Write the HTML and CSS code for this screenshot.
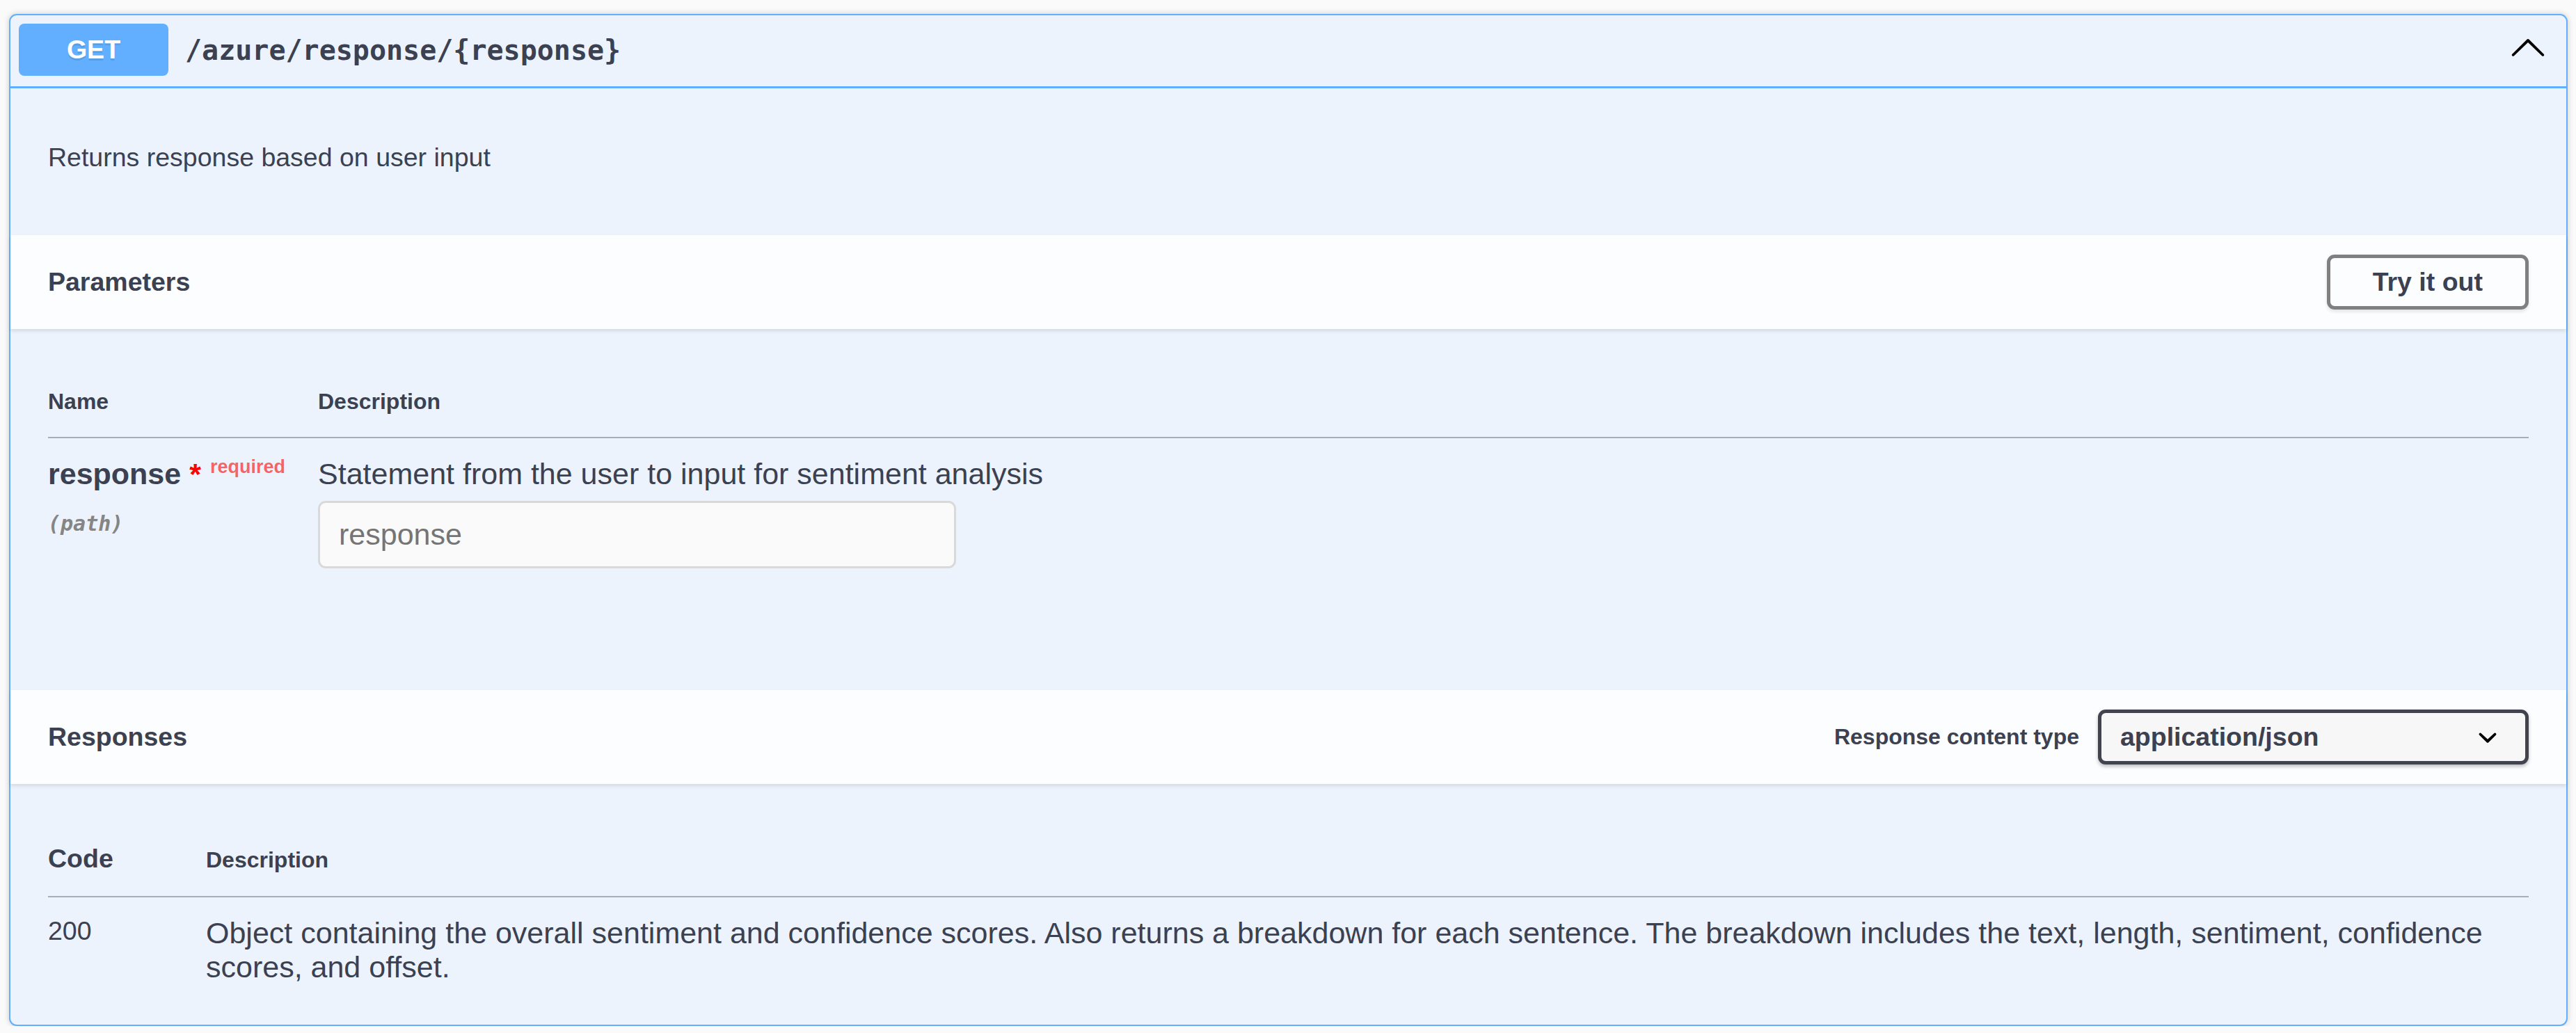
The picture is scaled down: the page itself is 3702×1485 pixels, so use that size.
FILE: index.html
```html
<!DOCTYPE html>
<html lang="en">
<head>
<meta charset="utf-8">
<title>GET /azure/response/{response}</title>
<link rel="stylesheet" href="styles.css">
</head>
<body>
<div class="page">
  <div class="opblock">
    <div class="summary">
      <span class="method">GET</span>
      <span class="path">/azure/response/{response}</span>
      <svg class="arrow" viewBox="0 0 20 20" aria-hidden="true"><path d="M 17.418 14.908 C 17.69 15.176 18.127 15.176 18.397 14.908 C 18.667 14.64 18.668 14.207 18.397 13.939 L 10.489 6.109 C 10.219 5.841 9.782 5.841 9.51 6.109 L 1.602 13.939 C 1.332 14.207 1.332 14.64 1.602 14.908 C 1.873 15.176 2.311 15.176 2.581 14.908 L 10 7.767 L 17.418 14.908 Z"/></svg>
    </div>

    <div class="description">
      <p>Returns response based on user input</p>
    </div>

    <div class="section-header">
      <h4 class="section-title">Parameters</h4>
      <button class="btn" type="button">Try it out</button>
    </div>

    <div class="table-container">
      <table class="params">
        <thead>
          <tr>
            <th class="col-name">Name</th>
            <th>Description</th>
          </tr>
        </thead>
        <tbody>
          <tr>
            <td class="col-name">
              <div class="param-name">response<span class="star">&nbsp;*</span><span class="req">required</span></div>
              <div class="param-in">(path)</div>
            </td>
            <td class="col-desc">
              <p class="param-desc">Statement from the user to input for sentiment analysis</p>
              <input class="param-input" type="text" placeholder="response" disabled>
            </td>
          </tr>
        </tbody>
      </table>
    </div>

    <div class="section-header">
      <h4 class="section-title">Responses</h4>
      <label class="ct-label">Response content type</label>
      <div class="select">
        <span>application/json</span>
        <svg class="select-arrow" viewBox="0 0 20 20" aria-hidden="true"><path d="M13.418 7.859a.695.695 0 0 1 .978 0 .68.68 0 0 1 0 .969l-3.908 3.83a.697.697 0 0 1-.979 0l-3.908-3.83a.68.68 0 0 1 0-.969.695.695 0 0 1 .978 0L10 11l3.418-3.141z"/></svg>
      </div>
    </div>

    <div class="responses-inner">
      <table class="responses">
        <thead>
          <tr>
            <th class="col-status">Code</th>
            <th class="col-rdesc">Description</th>
          </tr>
        </thead>
        <tbody>
          <tr>
            <td class="col-status">200</td>
            <td class="col-rdesc">
              <p class="resp-desc">Object containing the overall sentiment and confidence scores. Also returns a breakdown for each sentence. The breakdown includes the text, length, sentiment, confidence scores, and offset.</p>
            </td>
          </tr>
        </tbody>
      </table>
    </div>
  </div>
</div>
</body>
</html>
```

FILE: styles.css
```css
html, body {
  margin: 0;
  padding: 0;
  background: #fafafa;
}

body {
  font-family: "Liberation Sans", Arial, sans-serif;
  color: #3b4151;
}

.page {
  padding: 20px 12px 0 13px;
}

.opblock {
  border: 2px solid #61affe;
  border-radius: 11px;
  background: #ecf3fd;
  box-shadow: 0 0 8px rgba(0, 0, 0, 0.19);
}

/* summary bar */
.summary {
  display: flex;
  align-items: center;
  padding: 12px 14px 15px 12px;
  border-bottom: 3px solid #61affe;
}

.method {
  display: block;
  min-width: 215px;
  padding: 16px 0;
  line-height: 43px;
  font-size: 37.5px;
  font-weight: 700;
  text-align: center;
  color: #fff;
  background: #61affe;
  border-radius: 8px;
  text-shadow: 0 3px 0 rgba(0, 0, 0, 0.1);
}

.path {
  padding: 0 24px;
  font-family: "DejaVu Sans Mono", "Liberation Mono", monospace;
  font-size: 40px;
  font-weight: 700;
  color: #3b4151;
}

.arrow {
  width: 54px;
  height: 54px;
  margin-left: auto;
  margin-right: 14px;
  margin-bottom: 9px;
  fill: #000;
}

/* description */
.description {
  padding: 40px 54px;
  margin-bottom: 13px;
}

.description p {
  margin: 37.5px 0;
  font-size: 37.5px;
}

/* section headers */
.section-header {
  display: flex;
  align-items: center;
  box-sizing: border-box;
  min-height: 135px;
  padding: 21px 54px;
  background: rgba(255, 255, 255, 0.8);
  box-shadow: 0 3px 5px rgba(0, 0, 0, 0.1);
}

.section-title {
  flex: 1;
  margin: 0;
  font-size: 37.5px;
  font-weight: 700;
  color: #3b4151;
}

.btn {
  padding: 13px 61px;
  line-height: 43px;
  font-family: "Liberation Sans", Arial, sans-serif;
  font-size: 37.5px;
  font-weight: 700;
  color: #3b4151;
  background: transparent;
  border: 5px solid #808080;
  border-radius: 11px;
  box-shadow: 0 3px 5px rgba(0, 0, 0, 0.1);
}

/* parameters table */
.table-container {
  padding: 54px 54px;
}

table {
  width: 100%;
  border-collapse: collapse;
  border-spacing: 0;
}

th {
  text-align: left;
  padding: 32px 0;
  font-size: 32px;
  font-weight: 700;
  color: #3b4151;
  border-bottom: 2px solid #a9adb8;
  vertical-align: baseline;
}

td {
  vertical-align: top;
  padding: 27px 0 0;
}

.params .col-name {
  width: 388px;
}

.param-name {
  font-size: 43px;
  font-weight: 700;
  line-height: 49px;
  white-space: nowrap;
}

.star {
  color: red;
}

.req {
  padding: 0 13px;
  font-size: 27px;
  line-height: 1;
  color: rgba(255, 0, 0, 0.6);
  vertical-align: 16px;
}

.param-in {
  margin-top: 29px;
  font-family: "DejaVu Sans Mono", "Liberation Mono", monospace;
  font-size: 30px;
  font-weight: 700;
  font-style: italic;
  color: #858585;
}

.col-desc {
  padding-bottom: 121px;
}

.param-desc {
  margin: 0;
  font-size: 43px;
  line-height: 49px;
}

.param-input {
  display: block;
  box-sizing: border-box;
  width: 917px;
  height: 97px;
  margin: 14px 0 0;
  padding: 21px 27px;
  font-family: "Liberation Sans", Arial, sans-serif;
  font-size: 43px;
  color: #3b4151;
  background: #fafafa;
  border: 3px solid #d9d9d9;
  border-radius: 11px;
  outline: none;
}

.param-input::placeholder {
  color: #757575;
  opacity: 1;
}

/* responses header controls */
.ct-label {
  margin-right: 27px;
  font-size: 32px;
  font-weight: 700;
  color: #3b4151;
}

.select {
  display: flex;
  align-items: center;
  justify-content: space-between;
  box-sizing: border-box;
  width: 619px;
  padding: 13px 27px;
  line-height: 43px;
  font-size: 37.5px;
  font-weight: 700;
  color: #3b4151;
  background: #f7f7f7;
  border: 5px solid #41444e;
  border-radius: 11px;
  box-shadow: 0 3px 5px rgba(0, 0, 0, 0.25);
}

.select-arrow {
  width: 54px;
  height: 54px;
  margin: -6px 0;
  fill: #000;
}

/* responses table */
.responses-inner {
  padding: 54px 54px 58px;
}

.responses th.col-status {
  width: 227px;
  font-size: 37.5px;
}

.responses td.col-status {
  font-size: 37.5px;
}

.resp-desc {
  margin: 0;
  font-size: 43px;
  line-height: 49px;
}
```
